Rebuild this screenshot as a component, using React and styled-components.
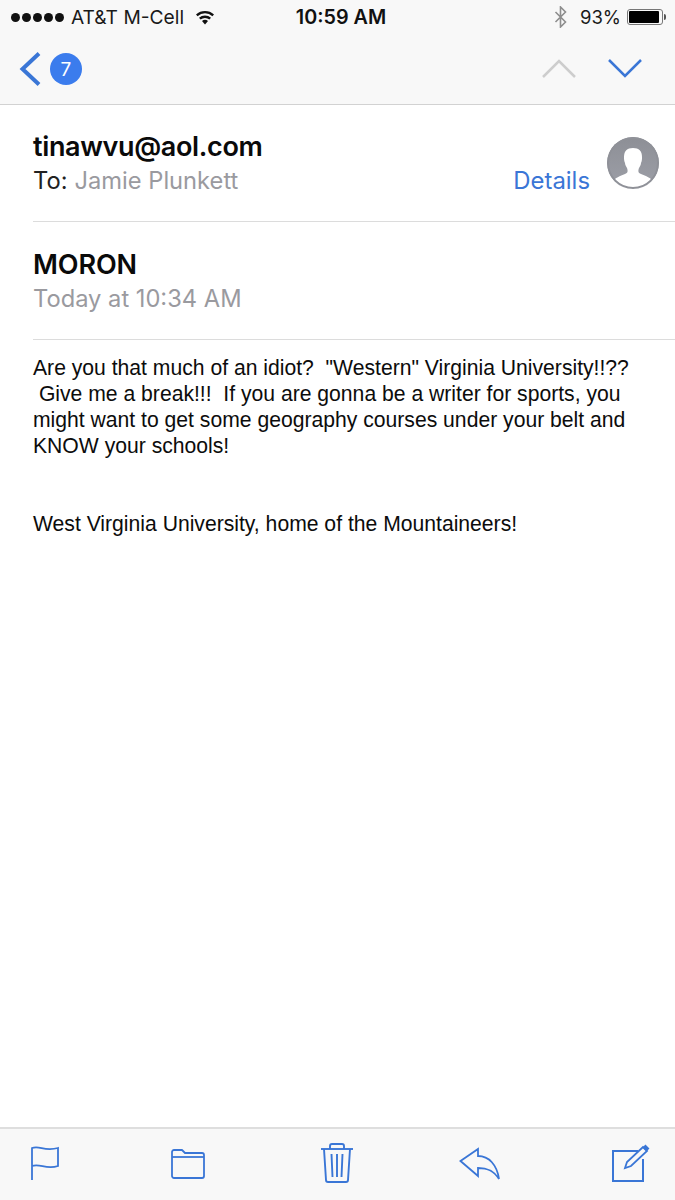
import React from "react";
import styled, { createGlobalStyle } from "styled-components";

const Global = createGlobalStyle`
    html, body {
        margin: 0;
        padding: 0;
        background: #fff;
    }
    body {
        font-family: Inter, "Liberation Sans", sans-serif;
    }
`;

const BLUE = "#3a76d6";

const Screen = styled.div`
    width: 675px;
    height: 1200px;
    display: flex;
    flex-direction: column;
    background: #fff;
    overflow: hidden;
`;

const TopBar = styled.header`
    height: 104px;
    flex: none;
    background: #f8f8f8;
    border-bottom: 1px solid #d2d2d2;
    display: flex;
    flex-direction: column;
`;

const StatusBar = styled.div`
    height: 34px;
    display: grid;
    grid-template-columns: 1fr auto 1fr;
    align-items: center;
    padding: 0 8px 0 11px;
    font-size: 19.2px;
    color: #1a1a1a;
`;

const StatusLeft = styled.div`
    display: flex;
    align-items: center;
`;

const Dots = styled.div`
    display: flex;
    gap: 2px;
    margin-right: 7px;
`;

const Dot = styled.span`
    width: 9px;
    height: 9px;
    border-radius: 50%;
    background: #111;
`;

const Carrier = styled.span`
    margin-right: 10px;
`;

const Clock = styled.div`
    font-size: 19.8px;
    font-weight: 600;
    color: #111;
    padding-left: 4px;
`;

const StatusRight = styled.div`
    display: flex;
    align-items: center;
    justify-content: flex-end;
`;

const Percent = styled.span`
    font-size: 18.5px;
    margin: 0 6px 0 12px;
`;

const Battery = styled.div`
    width: 36px;
    height: 16px;
    box-sizing: border-box;
    border: 1px solid #777;
    border-radius: 3px;
    padding: 1px;
    margin-right: 4px;
    position: relative;

    &::after {
        content: "";
        position: absolute;
        right: -4px;
        top: 4px;
        width: 2px;
        height: 6px;
        background: #555;
        border-radius: 0 2px 2px 0;
    }
`;

const BatteryFill = styled.div`
    height: 100%;
    background: #000;
    border-radius: 1px;
`;

const NavRow = styled.div`
    flex: 1;
    display: flex;
    align-items: center;
    padding: 0 33px 0 19px;
`;

const Badge = styled.div`
    width: 32px;
    height: 32px;
    margin-left: 9px;
    border-radius: 50%;
    background: #3b7ced;
    color: #fff;
    font-size: 19px;
    display: flex;
    align-items: center;
    justify-content: center;
`;

const NavRight = styled.div`
    margin: 0 0 2px auto;
    display: flex;
    gap: 32px;
    align-items: center;
`;

const HeaderBlock = styled.section`
    margin-left: 33px;
    border-bottom: 1px solid #dcdcdc;
    height: 117px;
    box-sizing: border-box;
    padding: 25px 16px 0 0;
    display: flex;
    justify-content: space-between;
`;

const SenderCol = styled.div`
    display: flex;
    flex-direction: column;
`;

const Sender = styled.div`
    font-size: 27px;
    line-height: 33px;
    font-weight: 600;
    letter-spacing: -0.35px;
    color: #0a0a0a;
`;

const ToLine = styled.div`
    font-size: 23.7px;
    line-height: 34px;
    color: #222;
    margin-top: 1px;
`;

const Recipient = styled.span`
    color: #9a9a9f;
    margin-left: 7px;
`;

const DetailsCol = styled.div`
    display: flex;
    align-items: flex-start;
    gap: 17px;
    padding-top: 7px;
`;

const DetailsLink = styled.a`
    font-size: 23.9px;
    color: ${BLUE};
    margin-top: 27px;
    line-height: 34px;
`;

const SubjectBlock = styled.section`
    margin-left: 33px;
    border-bottom: 1px solid #dcdcdc;
    height: 118px;
    box-sizing: border-box;
    padding-top: 26px;
`;

const Subject = styled.div`
    font-size: 27px;
    line-height: 33px;
    font-weight: 600;
    letter-spacing: -0.1px;
    color: #0a0a0a;
`;

const DateLine = styled.div`
    font-size: 23.7px;
    line-height: 34px;
    color: #9a9a9f;
    margin-top: 1px;
`;

const Body = styled.main`
    flex: 1;
    padding: 15px 33px 0;
    font-family: "Liberation Sans", Arial, sans-serif;
    font-size: 21.15px;
    line-height: 26px;
    color: #0c0c0c;
`;

const Para = styled.p`
    margin: 0 0 52px;
    white-space: pre-wrap;
`;

const Toolbar = styled.footer`
    height: 73px;
    flex: none;
    box-sizing: border-box;
    background: #f8f8f8;
    border-top: 2px solid #dedede;
    display: flex;
    align-items: center;
    padding: 0 0 3px 30px;
`;

const Icon = styled.svg`
    display: block;
    flex: none;
    margin-left: ${({ $left }) => $left || 0}px;
    fill: none;
    stroke: ${BLUE};
    stroke-width: ${({ $w }) => $w || 2};
    stroke-linejoin: ${({ $join }) => $join || "miter"};
`;

const Wifi = () => (
    <svg width="22" height="16" viewBox="0 0 22 16" fill="#111">
        <path d="M11 15.5l-3-3.4a4.6 4.6 0 0 1 6 0z" />
        <path d="M6.6 10.6L5 8.8a9 9 0 0 1 12 0l-1.6 1.8a6.6 6.6 0 0 0-8.8 0z" />
        <path d="M3.6 7.2L2 5.4a13.4 13.4 0 0 1 18 0l-1.6 1.8a11 11 0 0 0-14.8 0z" />
    </svg>
);

const Bluetooth = () => (
    <svg width="14" height="22" viewBox="0 0 14 22" fill="none" stroke="#8e8e8e" strokeWidth="1.6">
        <path d="M1.5 6l10 10-5 5V1l5 5-10 10" />
    </svg>
);

const Avatar = () => (
    <svg width="52" height="52" viewBox="0 0 52 52">
        <defs>
            <linearGradient id="avatarFill" x1="0" y1="0" x2="0" y2="1">
                <stop offset="0" stopColor="#8d8f96" />
                <stop offset="1" stopColor="#9d9fa7" />
            </linearGradient>
            <clipPath id="avatarClip">
                <circle cx="26" cy="26" r="26" />
            </clipPath>
        </defs>
        <circle cx="26" cy="26" r="26" fill="url(#avatarFill)" />
        <g clipPath="url(#avatarClip)">
            <path
                d="M26 11c-6 0-9 3-9 9 0 2 0 4 1 6 0 2 1 3 2 5 1 3 1 5-2 6-5 2-10 4-12 7-1 3 0 8 0 8h40s1-5 0-8c-2-3-7-5-12-7-3-1-3-3-2-6 1-2 2-3 2-5 1-2 1-4 1-6 0-6-3-9-9-9z"
                fill="#fff"
            />
            <circle cx="26" cy="26" r="25" fill="none" stroke="#8f9198" strokeWidth="2" />
        </g>
    </svg>
);

const Flag = () => (
    <Icon $w={1.8} width="30" height="34" viewBox="0 0 30 34">
        <path d="M2 34V2c8-3 12 4 26 0v18c-12 4-18-3-26 0" />
    </Icon>
);

const Folder = () => (
    <Icon $left={110} $w={1.8} $join="round" width="36" height="31" viewBox="0 0 36 31">
        <path d="M2 4a2 2 0 0 1 2-2h8l3 3h17a2 2 0 0 1 2 2v21a2 2 0 0 1-2 2H4a2 2 0 0 1-2-2z" />
        <path d="M2 9h32" />
    </Icon>
);

const Trash = () => (
    <Icon $left={114} $w={1.9} $join="round" width="34" height="42" viewBox="0 0 34 42">
        <path d="M1 7h32" />
        <path d="M10 7V4a2 2 0 0 1 2-2h10a2 2 0 0 1 2 2v3" />
        <path d="M4 7l2 31a2 2 0 0 0 2 2h18a2 2 0 0 0 2-2l2-31" />
        <path d="M11.5 12l1 23M17 12v23M22.5 12l-1 23" />
    </Icon>
);

const Reply = () => (
    <Icon $left={105} $w={1.8} width="42" height="34" viewBox="0 0 42 34">
        <path d="M1.5 15L19 3v7c11 0 19 9 21 23-5-8-11-11-21-11v8z" />
    </Icon>
);

const Compose = () => (
    <Icon $left={110} width="40" height="38" viewBox="0 0 40 38">
        <path d="M27 7H2v30h30V15" />
        <path d="M14 24l2-6L32 3l4 4-16 15z" strokeWidth="1.8" />
        <path d="M33 2l4 4" strokeWidth="4" />
    </Icon>
);

export default function App() {
    return (
        <Screen>
            <Global />
            <TopBar>
                <StatusBar>
                    <StatusLeft>
                        <Dots>
                            {[0, 1, 2, 3, 4].map((d) => (
                                <Dot key={d} />
                            ))}
                        </Dots>
                        <Carrier>AT&amp;T M-Cell</Carrier>
                        <Wifi />
                    </StatusLeft>
                    <Clock>10:59 AM</Clock>
                    <StatusRight>
                        <Bluetooth />
                        <Percent>93%</Percent>
                        <Battery>
                            <BatteryFill style={{ width: "93%" }} />
                        </Battery>
                    </StatusRight>
                </StatusBar>
                <NavRow>
                    <svg width="22" height="34" viewBox="0 0 22 34" fill="none" stroke={BLUE} strokeWidth="4">
                        <path d="M20 1.5L3.5 17 20 32.5" />
                    </svg>
                    <Badge>7</Badge>
                    <NavRight>
                        <svg width="34" height="19" viewBox="0 0 34 19" fill="none" stroke="#cdcdcd" strokeWidth="2.5">
                            <path d="M1 18L17 2l16 16" />
                        </svg>
                        <svg width="34" height="19" viewBox="0 0 34 19" fill="none" stroke={BLUE} strokeWidth="2.5">
                            <path d="M1 1l16 16L33 1" />
                        </svg>
                    </NavRight>
                </NavRow>
            </TopBar>
            <HeaderBlock>
                <SenderCol>
                    <Sender>tinawvu@aol.com</Sender>
                    <ToLine>
                        To:
                        <Recipient>Jamie Plunkett</Recipient>
                    </ToLine>
                </SenderCol>
                <DetailsCol>
                    <DetailsLink>Details</DetailsLink>
                    <Avatar />
                </DetailsCol>
            </HeaderBlock>
            <SubjectBlock>
                <Subject>MORON</Subject>
                <DateLine>Today at 10:34 AM</DateLine>
            </SubjectBlock>
            <Body>
                <Para>
                    Are you that much of an idiot?  "Western" Virginia University!!??{"\n"} Give me a break!!!  If you are gonna be a writer for sports, you{"\n"}might want to get some geography courses under your belt and{"\n"}KNOW your schools!
                </Para>
                <Para>West Virginia University, home of the Mountaineers!</Para>
            </Body>
            <Toolbar>
                <Flag />
                <Folder />
                <Trash />
                <Reply />
                <Compose />
            </Toolbar>
        </Screen>
    );
}
